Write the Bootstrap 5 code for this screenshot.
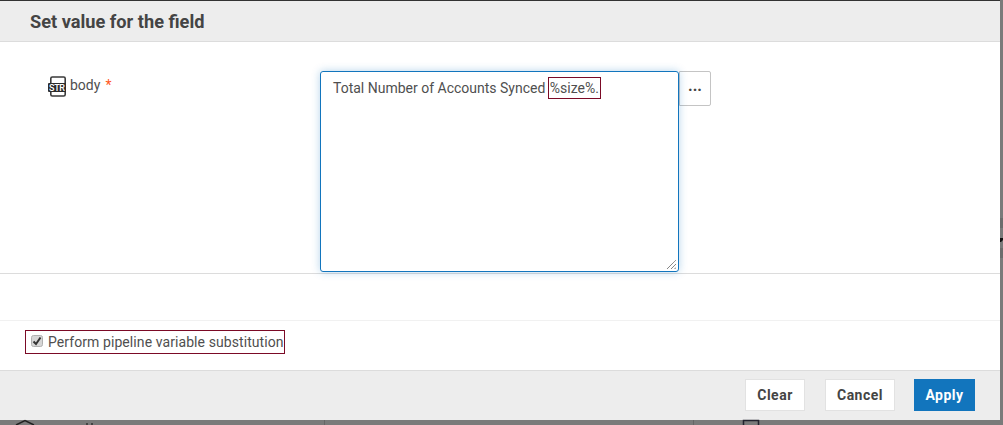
<!DOCTYPE html>
<html><head><meta charset="utf-8">
<link href="https://cdn.jsdelivr.net/npm/bootstrap@5.3.0/dist/css/bootstrap.min.css" rel="stylesheet">
<style>
html,body{height:100%;margin:0;overflow:hidden}
body{background:#7a7a7a;font-family:Roboto,sans-serif;font-size:14px;color:#4f4f4f;position:relative}
.dlg{width:1000px;height:420px;background:#fff;border-top:1px solid #333;display:flex;flex-direction:column}
.dlg-head{height:41px;background:#ededed;border-bottom:1px solid #dcdcdc;padding-left:30px;font-size:18.2px;font-weight:700;color:#444;line-height:42px;flex:none}
.dlg-body{height:232px;border-bottom:1px solid #dcdcdc;flex:none;display:flex;padding-top:29px}
.lbl{width:320px;padding-left:48px;display:flex;align-items:flex-start;line-height:17px;padding-top:6px}
.lbl svg{flex:none;margin:-1px 4px 0 0}
.req{color:#ff5722;margin-left:5px}
.ta{width:359px;height:201px;border:1px solid #1275bd;border-radius:3px;box-shadow:0 0 8px rgba(18,117,189,.3);padding:8px 12px;line-height:17px;position:relative;flex:none;font-size:14px}
.hl{outline:1px solid #7b0a26;padding:2px 1px 2px 1px}
.grip{position:absolute;right:1px;bottom:1px}
.dots{width:32px;height:35px;border:1px solid #c4c4c4;border-radius:0 2px 2px 0;background:#fff;font-weight:700;color:#444;margin:0;padding:0 0 6px;line-height:24px;flex:none}
.gap-row{height:47px;border-bottom:1px solid #f1f1f1;flex:none}
.chk-row{flex:1;padding:9px 0 0 25px}
.chk-box{display:inline-flex;align-items:center;height:24px;width:260px;border:1px solid #7b0a26;padding:0 0 0 5px;line-height:17px;white-space:nowrap}
.chk-box svg{flex:none;margin:0 5px 3px 0}
.chk-txt{letter-spacing:.08px}
.dlg-foot{height:50px;background:#ededed;border-top:1px solid #dcdcdc;flex:none;display:flex;justify-content:flex-end;align-items:flex-start;padding:8px 25px 0 0}
.fbtn{height:32px;border:1px solid #e2e2e2;background:#fff;color:#444;font-weight:700;font-size:14px;letter-spacing:.5px;border-radius:0;padding:0;margin-left:20px;line-height:30px}
.b-clear{width:60px}.b-cancel{width:70px}
.b-apply{width:61px;background:#1275bd;border-color:#1275bd;color:#fff;margin-left:19px}
.under{position:absolute;left:0;top:0}
</style></head>
<body>
<div class="dlg">
  <div class="dlg-head">Set value for the field</div>
  <div class="dlg-body">
    <div class="lbl">
      <svg width="18" height="21" viewBox="0 0 18 21"><rect x="2.800" y="1" width="14.400" height="19" rx="1.500" fill="#fff" stroke="#3a3a3a" stroke-width="1.600"/><rect x="0" y="7" width="18" height="9" rx="1" fill="#2c2c2c"/><text x="9" y="14.800" font-size="9" font-weight="500" text-anchor="middle" textLength="16" lengthAdjust="spacing" fill="#fff" font-family="Roboto">STR</text></svg>
      <span>body</span><span class="req">*</span>
    </div>
    <div class="ta">Total Number of Accounts Synced <span class="hl">%size%.</span>
      <svg class="grip" width="11" height="11" viewBox="0 0 11 11"><path d="M1 10 10 1M5 10 10 5M8.500 10 10 8.500" stroke="#555" stroke-width="1" stroke-dasharray="1 .5" fill="none"/></svg>
    </div>
    <button type="button" class="btn dots">...</button>
  </div>
  <div class="gap-row"></div>
  <div class="chk-row">
    <div class="chk-box"><svg width="12" height="12" viewBox="0 0 12 12"><rect x=".5" y=".5" width="11" height="11" rx="2" fill="#d6d6d6" stroke="#b0b0b0"/><path d="M2.500 6.500 5 9 9.500 2.500" fill="none" stroke="#333" stroke-width="2"/></svg><span class="chk-txt">Perform pipeline variable substitution</span></div>
  </div>
  <div class="dlg-foot">
    <button type="button" class="btn fbtn b-clear">Clear</button>
    <button type="button" class="btn fbtn b-cancel">Cancel</button>
    <button type="button" class="btn fbtn b-apply">Apply</button>
  </div>
</div>
<svg class="under" width="1003" height="425" viewBox="0 0 1003 425">
  <path d="M16 425 25 420.500 34 425" fill="none" stroke="#222" stroke-width="1.500"/>
  <path d="M87 425V423M92 425V423" stroke="#333" stroke-width="1.500"/>
  <path d="M324.500 420V425M693.500 420V425" stroke="#666"/>
  <path d="M743.500 425V420.500H758.500V425" fill="none" stroke="#22222e" stroke-width="1.500"/>
  <path d="M1000 218h3v10h-3zM1000 248h3v10h-3z" fill="#6c6c6c"/>
  <path d="M1000 238h3v2l-2 2h-1z" fill="#111"/>
</svg>
<script src="https://cdn.jsdelivr.net/npm/bootstrap@5.3.0/dist/js/bootstrap.bundle.min.js"></script>
</body></html>
